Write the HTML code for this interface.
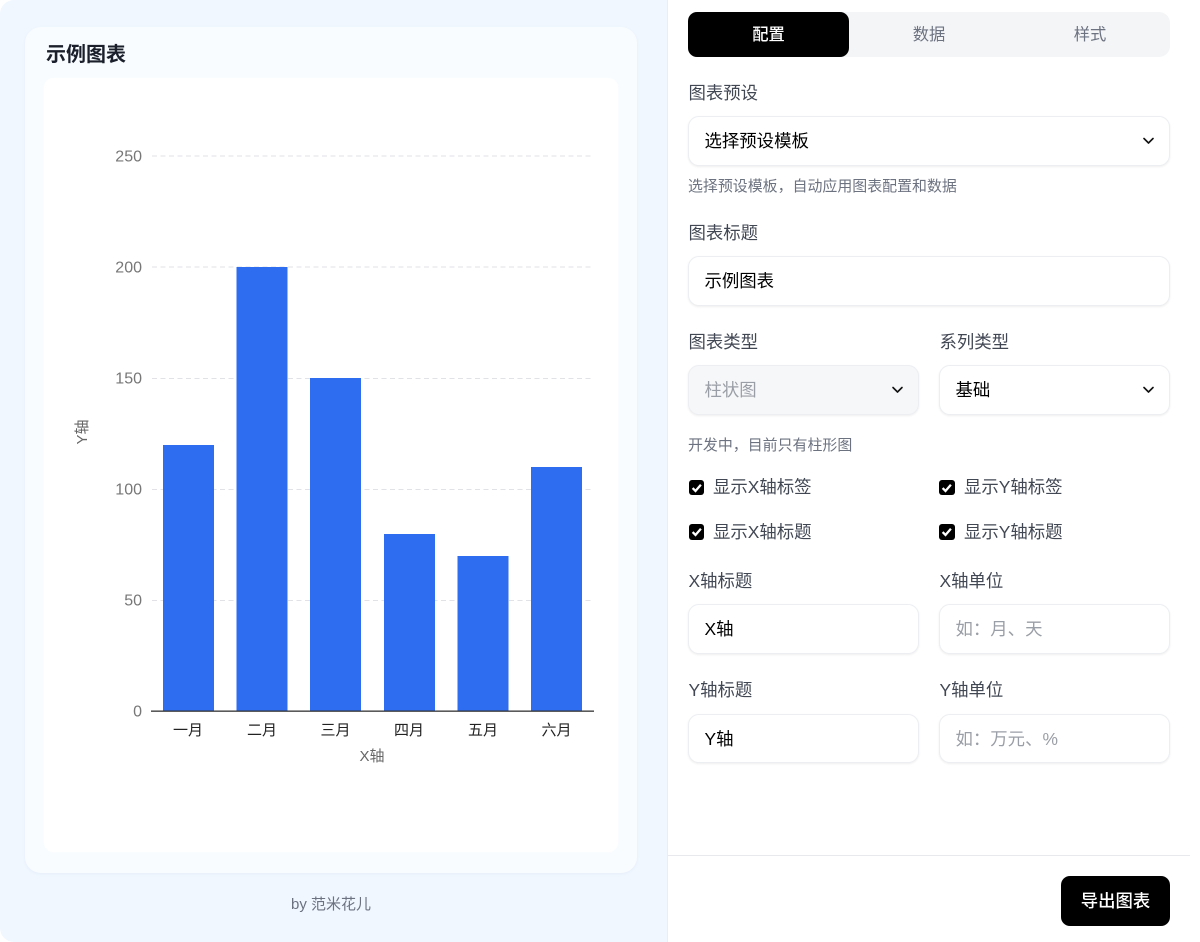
<!DOCTYPE html>
<html lang="zh"><head><meta charset="utf-8"><title>示例图表</title>
<style>
*{box-sizing:border-box}
html,body{margin:0;padding:0;width:1200px;height:942px;overflow:hidden;background:#fff}
body{font-family:"Liberation Sans","Noto Sans CJK SC",sans-serif;position:relative}
.a{position:absolute;white-space:nowrap}
#left{left:0;top:0;width:668px;height:942px;background:#f0f7ff;border-radius:14px 0 0 14px;border-right:1px solid #e8eef6}
#card{left:25px;top:27px;width:612px;height:846px;background:#f8fcff;border-radius:16px;box-shadow:0 1px 3px rgba(30,60,110,.05)}
#inner{left:44px;top:78px;width:574px;height:774px;background:#fff;border-radius:10px;box-shadow:0 0 2px #fdfeff}
.lb{font-size:17.4px;line-height:24px;color:#414753}
.hint{font-size:14.95px;line-height:20px;color:#6c7280}
.box{height:49.5px;border-radius:11px;background:#fff;border:1px solid #eceef1;box-shadow:0 1px 2px rgba(0,0,0,.07);font-size:17.4px;line-height:49px;padding-left:15.500px;color:#000}
.ph{color:#9a9ea6}
.ck{width:15.500px;height:15.500px;background:#000;border-radius:3px}
.ck svg{display:block}
.cl{font-size:17.4px;line-height:24px;color:#414753}
.chev{position:absolute;right:13px;top:16px}
</style></head><body>
<div class="a" id="left"></div>
<div class="a" id="card"></div>
<div class="a" id="inner"></div>
<div class="a" style="left:46px;top:41px;font-size:20px;line-height:28px;font-weight:700;color:#1a1f2b">示例图表</div>

<svg class="a" style="left:0;top:0" width="667" height="942" viewBox="0 0 667 942" font-family="'Liberation Sans','Noto Sans CJK SC',sans-serif">
<g stroke="#e0e2e6" stroke-width="1" stroke-dasharray="5 3.5">
<line x1="152" x2="594" y1="156" y2="156"/><line x1="152" x2="594" y1="267" y2="267"/><line x1="152" x2="594" y1="378.500" y2="378.500"/><line x1="152" x2="594" y1="489.500" y2="489.500"/><line x1="152" x2="594" y1="600.500" y2="600.500"/>
</g>
<g fill="#2f6df0">
<rect x="163" y="445" width="51" height="266"/>
<rect x="236.500" y="267" width="51" height="444"/>
<rect x="310" y="378" width="51" height="333"/>
<rect x="384" y="534" width="51" height="177"/>
<rect x="457.500" y="556" width="51" height="155"/>
<rect x="531" y="467" width="51" height="244"/>
</g>
<rect x="151" y="710.500" width="443" height="1.300" fill="#333"/>
<g fill="#777" font-size="16" text-anchor="end">
<text x="142" y="161.500">250</text><text x="142" y="272.500">200</text><text x="142" y="383.500">150</text><text x="142" y="494.500">100</text><text x="142" y="605.500">50</text><text x="142" y="716.500">0</text>
</g>
<g fill="#222" font-size="15" text-anchor="middle">
<text x="188" y="735">一月</text><text x="262" y="735">二月</text><text x="335.500" y="735">三月</text><text x="409" y="735">四月</text><text x="483" y="735">五月</text><text x="556.500" y="735">六月</text>
</g>
<text x="372" y="761" fill="#666" font-size="15" text-anchor="middle">X轴</text>
<text transform="translate(87 432) rotate(-90)" fill="#666" font-size="15" text-anchor="middle">Y轴</text>
</svg>
<div class="a" style="left:291px;top:894px;font-size:15px;line-height:21px;color:#6c7280">by 范米花儿</div>

<!-- tabs -->
<div class="a" style="left:688px;top:12px;width:482px;height:45px;background:#f4f5f7;border-radius:11px"></div>
<div class="a" style="left:688px;top:12px;width:161px;height:45px;background:#000;border-radius:9px;color:#fff;font-size:16.3px;line-height:47px;text-align:center;font-weight:500">配置</div>
<div class="a" style="left:849px;top:12px;width:160px;height:45px;color:#6c7280;font-size:16.3px;line-height:47px;text-align:center">数据</div>
<div class="a" style="left:1010px;top:12px;width:160px;height:45px;color:#6c7280;font-size:16.3px;line-height:47px;text-align:center">样式</div>

<div class="a lb" style="left:688.500px;top:81px">图表预设</div>
<div class="a box" style="left:688px;top:116px;width:482px">选择预设模板<svg class="chev" width="15" height="15" viewBox="0 0 15 15"><path d="M3 5.500l4.500 4.500 4.500-4.500" fill="none" stroke="#111" stroke-width="1.600" stroke-linecap="round" stroke-linejoin="round"/></svg></div>
<div class="a hint" style="left:688px;top:177px">选择预设模板，自动应用图表配置和数据</div>

<div class="a lb" style="left:688.500px;top:221px">图表标题</div>
<div class="a box" style="left:688px;top:256px;width:482px">示例图表</div>

<div class="a lb" style="left:688.500px;top:330px">图表类型</div>
<div class="a lb" style="left:939.500px;top:330px">系列类型</div>
<div class="a box ph" style="left:688px;top:365px;width:231px;background:#f6f7f9">柱状图<svg class="chev" width="15" height="15" viewBox="0 0 15 15"><path d="M3 5.500l4.500 4.500 4.500-4.500" fill="none" stroke="#111" stroke-width="1.600" stroke-linecap="round" stroke-linejoin="round"/></svg></div>
<div class="a box" style="left:939px;top:365px;width:231px">基础<svg class="chev" width="15" height="15" viewBox="0 0 15 15"><path d="M3 5.500l4.500 4.500 4.500-4.500" fill="none" stroke="#111" stroke-width="1.600" stroke-linecap="round" stroke-linejoin="round"/></svg></div>
<div class="a hint" style="left:688px;top:436px">开发中，目前只有柱形图</div>

<div class="a ck" style="left:688.500px;top:479.500px"><svg width="15.500" height="15.500" viewBox="0 0 15 15"><path d="M3.500 7.800l2.800 2.800 5.200-6" fill="none" stroke="#fff" stroke-width="2.200"/></svg></div>
<div class="a cl" style="left:713px;top:475px">显示X轴标签</div>
<div class="a ck" style="left:939px;top:479.500px"><svg width="15.500" height="15.500" viewBox="0 0 15 15"><path d="M3.500 7.800l2.800 2.800 5.200-6" fill="none" stroke="#fff" stroke-width="2.200"/></svg></div>
<div class="a cl" style="left:964px;top:475px">显示Y轴标签</div>
<div class="a ck" style="left:688.500px;top:524px"><svg width="15.500" height="15.500" viewBox="0 0 15 15"><path d="M3.500 7.800l2.800 2.800 5.200-6" fill="none" stroke="#fff" stroke-width="2.200"/></svg></div>
<div class="a cl" style="left:713px;top:520px">显示X轴标题</div>
<div class="a ck" style="left:939px;top:524px"><svg width="15.500" height="15.500" viewBox="0 0 15 15"><path d="M3.500 7.800l2.800 2.800 5.200-6" fill="none" stroke="#fff" stroke-width="2.200"/></svg></div>
<div class="a cl" style="left:964px;top:520px">显示Y轴标题</div>

<div class="a lb" style="left:688.500px;top:569px">X轴标题</div>
<div class="a lb" style="left:939.500px;top:569px">X轴单位</div>
<div class="a box" style="left:688px;top:604px;width:231px">X轴</div>
<div class="a box ph" style="left:939px;top:604px;width:231px">如：月、天</div>

<div class="a lb" style="left:688.500px;top:678px">Y轴标题</div>
<div class="a lb" style="left:939.500px;top:678px">Y轴单位</div>
<div class="a box" style="left:688px;top:713.500px;width:231px">Y轴</div>
<div class="a box ph" style="left:939px;top:713.500px;width:231px">如：万元、%</div>

<div class="a" style="left:668px;top:855px;width:522px;height:1px;background:#e8e9ec"></div>
<div class="a" style="left:1061px;top:876px;width:109px;height:50px;background:#000;border-radius:9px;color:#fff;font-size:17.400px;line-height:50px;text-align:center;font-weight:500">导出图表</div>
</body></html>
